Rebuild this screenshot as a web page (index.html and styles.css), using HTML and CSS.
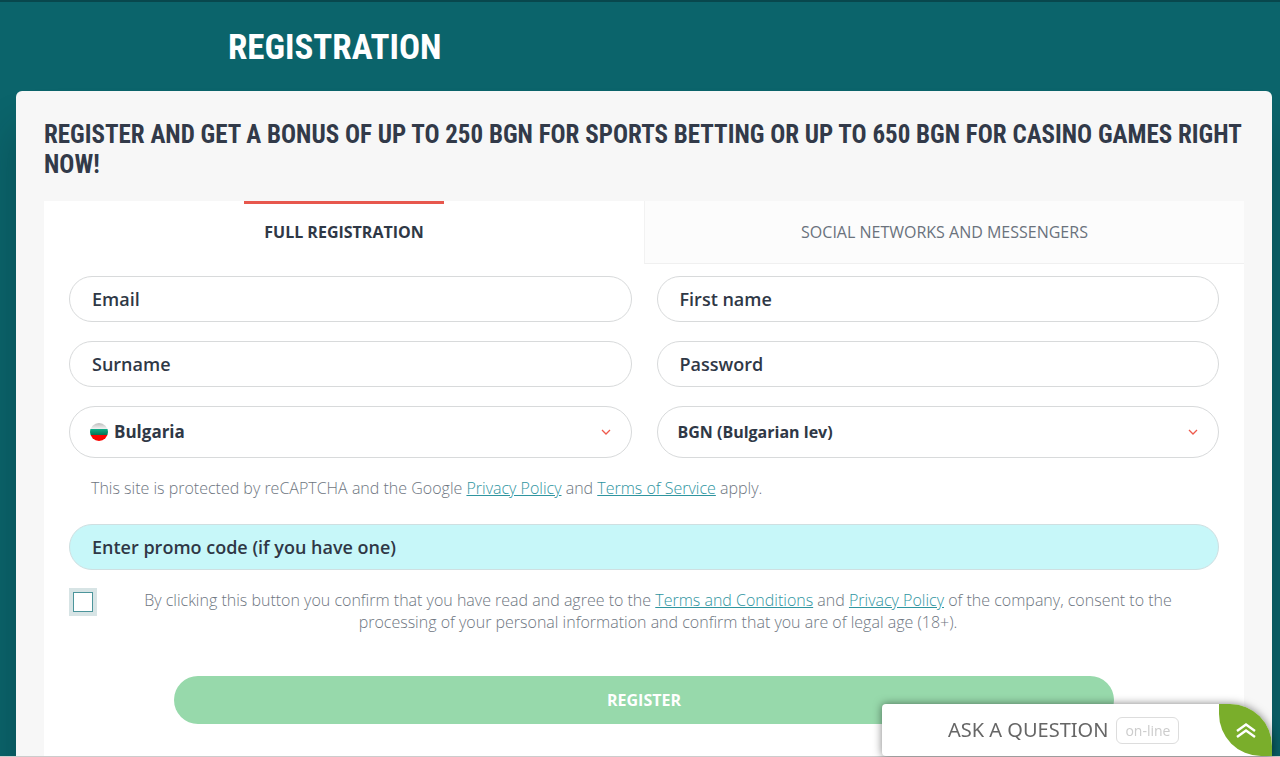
FILE: index.html
```html
<!DOCTYPE html>
<html lang="en">
<head>
<meta charset="utf-8">
<meta name="viewport" content="width=device-width, initial-scale=1">
<title>Registration</title>
<link rel="stylesheet" href="styles.css">
</head>
<body>
<div class="page">
  <header class="page-header">
    <h1 class="page-title">REGISTRATION</h1>
  </header>
  <main class="card">
    <h2 class="card-title">REGISTER AND GET A BONUS OF UP TO 250 BGN FOR SPORTS BETTING OR UP TO 650 BGN FOR CASINO GAMES RIGHT NOW!</h2>
    <div class="panel">
      <div class="tabs" role="tablist">
        <button class="tab tab-active" type="button" role="tab" aria-selected="true">FULL REGISTRATION</button>
        <button class="tab" type="button" role="tab" aria-selected="false">SOCIAL NETWORKS AND MESSENGERS</button>
      </div>
      <form class="form">
        <div class="fields">
          <input class="field" type="email" placeholder="Email" aria-label="Email">
          <input class="field" type="text" placeholder="First name" aria-label="First name">
          <input class="field" type="text" placeholder="Surname" aria-label="Surname">
          <input class="field" type="password" placeholder="Password" aria-label="Password">
          <div class="choice">
            <svg class="flag" viewBox="0 0 18 18" aria-hidden="true">
              <defs>
                <clipPath id="disc"><circle cx="9" cy="9" r="9"/></clipPath>
                <linearGradient id="white" x2="0" y2="1"><stop offset="0" stop-color="#bdbdbd"/><stop offset="1" stop-color="#f4f4f4"/></linearGradient>
                <linearGradient id="green" x2="0" y2="1"><stop offset="0" stop-color="#10ae88"/><stop offset="1" stop-color="#067554"/></linearGradient>
              </defs>
              <g clip-path="url(#disc)">
                <path fill="url(#white)" d="M0 0h18v6H0z"/>
                <path fill="url(#green)" d="M0 6h18v6H0z"/>
                <path fill="#fb0500" d="M0 12h18v6H0z"/>
              </g>
            </svg>
            <select class="select select-country" aria-label="Country"><option>Bulgaria</option></select>
            <svg class="chevron" viewBox="0 0 10 6" aria-hidden="true"><path d="M1 1l4 4 4-4"/></svg>
          </div>
          <div class="choice">
            <select class="select" aria-label="Currency"><option>BGN (Bulgarian lev)</option></select>
            <svg class="chevron" viewBox="0 0 10 6" aria-hidden="true"><path d="M1 1l4 4 4-4"/></svg>
          </div>
        </div>
        <p class="captcha-note">This site is protected by reCAPTCHA and the Google <a href="#">Privacy Policy</a> and <a href="#">Terms of Service</a> apply.</p>
        <input class="field field-promo" type="text" placeholder="Enter promo code (if you have one)" aria-label="Promo code">
        <div class="consent">
          <input class="consent-box" type="checkbox" id="consent">
          <label class="consent-text" for="consent">By clicking this button you confirm that you have read and agree to the <a href="#">Terms and Conditions</a> and <a href="#">Privacy Policy</a> of the company, consent to the processing of your personal information and confirm that you are of legal age (18+).</label>
        </div>
        <button class="submit" type="submit">REGISTER</button>
      </form>
    </div>
  </main>
</div>
<button class="chat" type="button">
  <span class="chat-title">ASK A QUESTION</span>
  <span class="chat-status">on-line</span>
  <span class="chat-corner">
    <svg class="chat-arrows" viewBox="0 0 20 15" aria-hidden="true"><path d="M1 8l9-6.500 9 6.500M1 14l9-6.500 9 6.500"/></svg>
  </span>
</button>
</body>
</html>
```
FILE: styles.css
```css
* {
  box-sizing: border-box;
}

body {
  margin: 0;
  height: 100vh;
  overflow: hidden;
  border-bottom: 1px solid #ccc;
  font-family: "Open Sans", sans-serif;
  font-size: 16px;
  color: #2f3846;
}

.page {
  display: flex;
  flex-direction: column;
  height: 100%;
  padding: 0 8px 0 16px;
  border-top: 2px solid #08474d;
  background: #0b646b;
}

.page-header {
  flex: none;
  padding: 25px 212px 23px;
}

.page-title,
.card-title {
  margin: 0;
  font-family: "Roboto Condensed", "Liberation Sans Narrow", Roboto, sans-serif;
  font-weight: 700;
}

.page-title {
  font-size: 35px;
  line-height: 41px;
  color: #fff;
}

.card {
  display: flex;
  flex: 1 0 auto;
  flex-direction: column;
  gap: 21px;
  padding: 29px 28px 0;
  border-radius: 6px 6px 0 0;
  background: #f7f7f7;
  box-shadow: 0 40px 40px rgba(0, 30, 35, 0.3);
}

.card-title {
  font-size: 25px;
  line-height: 30px;
  color: #323a49;
}

.panel {
  flex: 1;
  background: #fff;
}

.tabs {
  display: grid;
  grid-template-columns: 1fr 1fr;
}

.tab {
  display: flex;
  flex-direction: column;
  align-items: center;
  height: 63px;
  padding: 20px 0 0;
  border: 0;
  border-bottom: 1px solid #f0f0f0;
  border-left: 1px solid #f2f2f2;
  background: #fcfcfc;
  font: 400 16px/22px "Open Sans", sans-serif;
  color: #6a727c;
}

.tab-active {
  padding-top: 0;
  border-color: transparent;
  border-left: 0;
  background: #fff;
  font-weight: 700;
  color: #2f3846;
}

.tab-active::before {
  content: "";
  width: 200px;
  height: 3px;
  margin-bottom: 17px;
  background: #e7574d;
}

.form {
  padding: 12px 25px 32px;
}

.fields {
  display: grid;
  grid-template-columns: 1fr 1fr;
  gap: 19px 25px;
}

.field {
  width: 100%;
  height: 46px;
  padding: 0 22px;
  border: 1px solid #d8dadb;
  border-radius: 23px;
  background: #fff;
  font: 600 18px/24px "Open Sans", sans-serif;
  color: #2f3846;
}

.field::placeholder {
  color: #2f3846;
  opacity: 1;
}

.choice {
  display: flex;
  align-items: center;
  gap: 6px;
  height: 52px;
  padding: 0 20px;
  border: 1px solid #d8dadb;
  border-radius: 26px;
}

.flag {
  width: 18px;
  height: 18px;
}

.select {
  flex: 1;
  padding: 0;
  border: 0;
  appearance: none;
  background: transparent;
  font: 700 16px/24px "Open Sans", sans-serif;
  color: #2f3846;
}

.select-country {
  font-size: 17px;
}

.chevron {
  width: 10px;
  height: 6px;
  fill: none;
  stroke: #ee5a4c;
  stroke-width: 1.3;
}

.captcha-note {
  margin: 19px 22px 25px;
  font-weight: 300;
  line-height: 22px;
  color: #6e7681;
}

a {
  color: #2f959f;
}

.field-promo {
  background: #c7f7f9;
  border-color: #cfdfe1;
}

.consent {
  display: flex;
  margin-top: 18px;
}

.consent-box {
  flex: none;
  width: 20px;
  height: 20px;
  margin: 4px;
  border: 1px solid #4c959b;
  outline: 4px solid #d7e4e5;
  appearance: none;
  background: #fff;
}

.consent-text {
  flex: 1;
  padding: 1px 24px 0;
  font-weight: 300;
  line-height: 22px;
  text-align: center;
  color: #6e7681;
}

.submit {
  display: block;
  width: calc(100% - 210px);
  height: 48px;
  margin: 43px auto 0;
  border: 0;
  border-radius: 24px;
  background: #97d9ab;
  font: 700 16px/22px "Open Sans", sans-serif;
  color: #fff;
}

.chat {
  position: fixed;
  right: 8px;
  bottom: 1px;
  display: flex;
  align-items: center;
  gap: 8px;
  width: 390px;
  height: 52px;
  padding: 0 0 0 66px;
  border: 0;
  border-radius: 4px 42px 0 4px;
  background: #fff;
  box-shadow: 0 0 8px rgba(0, 0, 0, 0.5);
  color: #666;
}

.chat-title {
  font: 400 20px/28px "Noto Sans", sans-serif;
}

.chat-status {
  padding: 0 8px;
  border: 1px solid #ddd;
  border-radius: 6px;
  font: 400 14px/25px "Open Sans", sans-serif;
  color: #ccc;
}

.chat-corner {
  display: flex;
  align-items: center;
  justify-content: center;
  width: 53px;
  height: 52px;
  margin-left: auto;
  border-radius: 0 42px;
  background: #7aae2b;
}

.chat-arrows {
  width: 20px;
  height: 15px;
  fill: none;
  stroke: #fff;
  stroke-width: 2.4;
}
```
